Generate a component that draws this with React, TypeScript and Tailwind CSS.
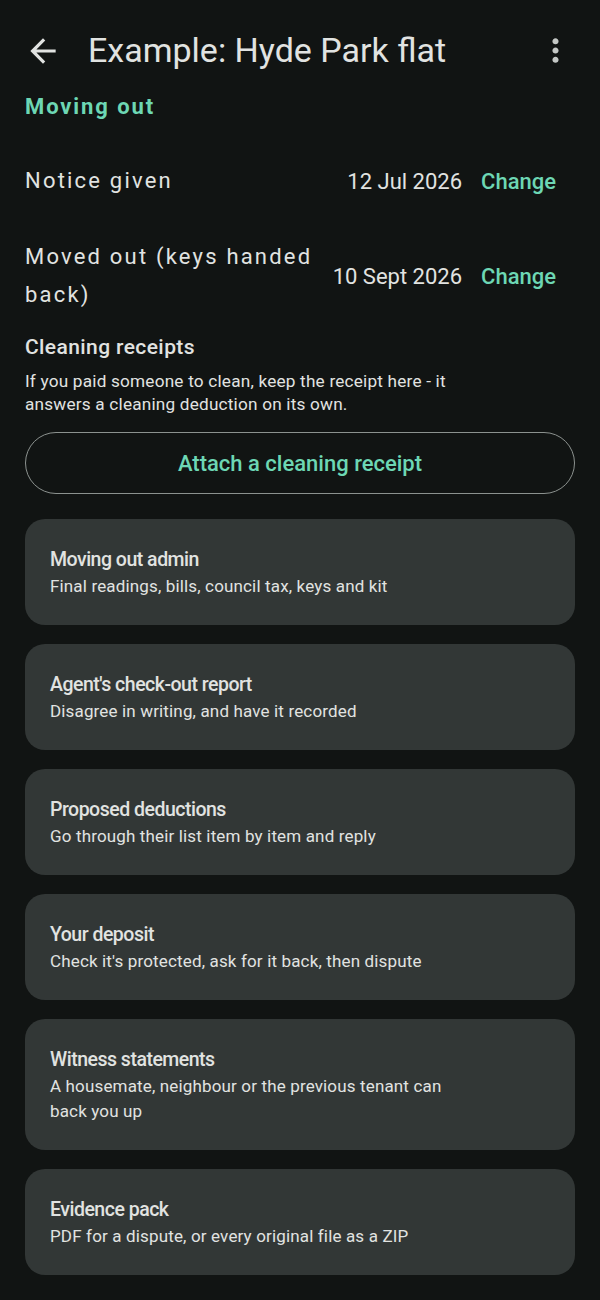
const sections = [
  { title: 'Moving out admin', sub: 'Final readings, bills, council tax, keys and kit' },
  { title: "Agent's check-out report", sub: 'Disagree in writing, and have it recorded' },
  { title: 'Proposed deductions', sub: 'Go through their list item by item and reply' },
  { title: 'Your deposit', sub: "Check it's protected, ask for it back, then dispute" },
  { title: 'Witness statements', sub: 'A housemate, neighbour or the previous tenant can back you up' },
  { title: 'Evidence pack', sub: 'PDF for a dispute, or every original file as a ZIP' },
]

function DateRow({ label, date }: { label: string; date: string }) {
  return (
    <div className="flex items-center gap-4 py-[18px]">
      <div className="flex-1 text-[22px] leading-[38px] tracking-[2.2px] text-[#e1e3e1]">{label}</div>
      <div className="text-[22px] text-[#e1e3e1]">{date}</div>
      <button className="pl-[3px] pr-[19px] text-[22px] font-medium text-[#6dd7b4]">Change</button>
    </div>
  )
}

export default function App() {
  return (
    <div className="w-[600px] h-[1300px] bg-[#111413] flex flex-col overflow-hidden" style={{ fontFamily: 'Roboto, "Noto Sans", sans-serif' }}>
      {/* Top app bar */}
      <div className="h-[97px] shrink-0 flex items-center pt-[4px] pl-[24px] pr-[26px] bg-[#111413] z-10">
        <svg width="38" height="38" viewBox="0 0 24 24" fill="#e1e3e1">
          <path d="M20 11H7.83l5.59-5.59L12 4l-8 8 8 8 1.41-1.41L7.83 13H20v-2z" />
        </svg>
        <h1 className="ml-[26px] flex-1 text-[34px] text-[#e1e3e1]">Example: Hyde Park flat</h1>
        <svg width="37" height="37" viewBox="0 0 24 24" fill="#c4c8c5">
          <path d="M12 8c1.1 0 2-.9 2-2s-.9-2-2-2-2 .9-2 2 .9 2 2 2zm0 2c-1.1 0-2 .9-2 2s.9 2 2 2 2-.9 2-2-.9-2-2-2zm0 6c-1.1 0-2 .9-2 2s.9 2 2 2 2-.9 2-2-.9-2-2-2z" />
        </svg>
      </div>

      <div className="flex-1 overflow-hidden px-[25px]">
        <h2 className="-mt-[5px] text-[22px] font-bold tracking-[1.9px] text-[#6dd7b4] leading-[30px]">Moving out</h2>

        <div className="mt-[22px]">
          <DateRow label="Notice given" date="12 Jul 2026" />
          <div className="mt-[2px]">
            <DateRow label="Moved out (keys handed back)" date="10 Sept 2026" />
          </div>
        </div>

        <h3 className="text-[21px] font-medium tracking-[0.4px] text-[#e1e3e1] leading-[30px]">Cleaning receipts</h3>
        <p className="mt-[8px] text-[17.2px] leading-[23px] tracking-[0.2px] text-[#e1e3e1] pr-[80px]">
          If you paid someone to clean, keep the receipt here - it answers a cleaning deduction on its own.
        </p>
        <button className="mt-[16px] w-full h-[62px] rounded-full border border-[#8c928f] text-[22px] font-medium text-[#6dd7b4]">
          Attach a cleaning receipt
        </button>

        <div className="mt-[25px] flex flex-col gap-[19px]">
          {sections.map((s) => (
            <div key={s.title} className="rounded-[20px] bg-[#323736] px-[25px] pt-[27px] pb-[26px]">
              <div className="text-[19.5px] font-medium leading-[28px] tracking-[-0.5px] text-[#e1e3e1]">{s.title}</div>
              <div className="text-[17px] leading-[25px] tracking-[0.15px] text-[#e1e3e1] pr-[75px]">{s.sub}</div>
            </div>
          ))}
        </div>
      </div>
    </div>
  )
}
